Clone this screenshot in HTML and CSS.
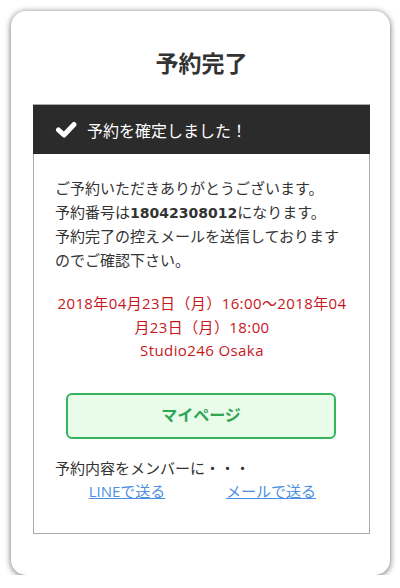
FILE: index.html
```html
<!DOCTYPE html>
<html lang="ja">
<head>
    <meta charset="UTF-8">
    <meta name="viewport" content="width=device-width, initial-scale=1.0">
    <title>予約完了</title>
    <link rel="stylesheet" href="styles.css">
</head>
<body>
    <div class="card">
        <h1>予約完了</h1>

        <div class="result-box">
            <div class="result-head">
                <svg class="check" width="22" height="17" viewBox="0 0 22 17">
                    <polyline points="3.5,9 9,14 19,3.5" fill="none" stroke="#fff" stroke-width="5" stroke-linecap="round" stroke-linejoin="round"/>
                </svg>
                <span>予約を確定しました！</span>
            </div>

            <div class="result-body">
                <p class="message">
                    ご予約いただきありがとうございます。<br>
                    予約番号は<b class="resv-no">18042308012</b>になります。<br>
                    予約完了の控えメールを送信しております<br>のでご確認下さい。
                </p>

                <p class="schedule">
                    2018年04月23日（月）16:00〜2018年04<br>
                    月23日（月）18:00<br>
                    Studio246 Osaka
                </p>

                <a class="btn-mypage" href="#">マイページ</a>

                <p class="share-label">予約内容をメンバーに・・・</p>
                <div class="share-links">
                    <a href="#">LINEで送る</a>
                    <a href="#">メールで送る</a>
                </div>
            </div>
        </div>
    </div>
</body>
</html>
```

FILE: styles.css
```css
body {
    margin: 0;
    padding: 0;
    background-color: #fff;
    color: #333;
    font-family: "Open Sans", "Noto Sans CJK JP", sans-serif;
}

.card {
    box-sizing: border-box;
    width: 379px;
    height: 564px;
    margin: 11px 0 0 11px;
    padding: 37px 20px 0 22px;
    background-color: #fff;
    border-radius: 15px;
    box-shadow: 0 1px 6px rgba(0, 0, 0, 0.6);
}

.card h1 {
    margin: 0 0 26px;
    font-size: 23px;
    line-height: 30px;
    text-align: center;
    color: #333;
}

.result-box {
    border-top: 1px solid #aaa;
}

.result-head {
    display: flex;
    align-items: center;
    gap: 10px;
    height: 49px;
    padding-left: 22px;
    background-color: #2b2b2b;
    color: #fff;
    font-size: 16px;
}

.check {
    display: block;
}

.result-body {
    padding: 23px 20px 29.5px 21px;
    border: 1px solid #aaa;
    border-top: none;
    font-size: 15px;
    line-height: 23.5px;
}

.result-body p {
    margin: 0;
}

.resv-no {
    font-family: "DejaVu Sans", "Noto Sans CJK JP", sans-serif;
    font-size: 14px;
}

.schedule {
    margin-top: 20px !important;
    text-align: center;
    color: #c8161d;
    letter-spacing: 0.4px;
}

.btn-mypage {
    display: flex;
    align-items: center;
    justify-content: center;
    height: 42px;
    margin: 30px 13px 18px 11px;
    border: 2px solid #35b45e;
    border-radius: 6px;
    background-color: #e9fce9;
    color: #2fa653;
    font-size: 16px;
    font-weight: bold;
    text-decoration: none;
}

.share-links {
    display: grid;
    grid-template-columns: 1fr 1fr;
    padding-right: 6px;
    text-align: center;
}

.share-links a {
    color: #4b8fe2;
    text-decoration: underline;
}
```
